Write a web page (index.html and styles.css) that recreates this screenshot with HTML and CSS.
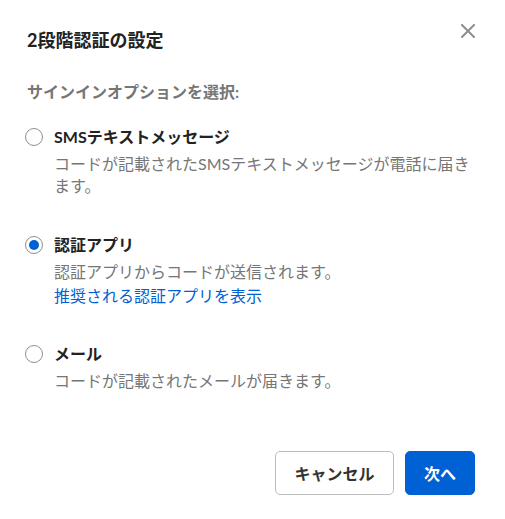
FILE: index.html
```html
<!DOCTYPE html>
<html lang="ja">
<head>
<meta charset="utf-8">
<title>2段階認証の設定</title>
<link rel="stylesheet" href="styles.css">
</head>
<body>
<div class="dialog">
  <div class="header">
    <h2 class="title">2段階認証の設定</h2>
    <button class="close" aria-label="閉じる">
      <svg width="14" height="14" viewBox="0 0 14 14"><path d="M1 1L13 13M13 1L1 13" stroke="#8e8e8e" stroke-width="2" stroke-linecap="square"/></svg>
    </button>
  </div>
  <p class="subtitle">サインインオプションを選択:</p>
  <div class="options">
    <label class="option opt-sms">
      <span class="radio"></span>
      <span class="body">
        <span class="label">SMSテキストメッセージ</span>
        <span class="desc">コードが記載されたSMSテキストメッセージが電話に届きます。</span>
      </span>
    </label>
    <label class="option opt-app">
      <span class="radio checked"></span>
      <span class="body">
        <span class="label">認証アプリ</span>
        <span class="desc">認証アプリからコードが送信されます。</span>
        <a class="link" href="#">推奨される認証アプリを表示</a>
      </span>
    </label>
    <label class="option opt-mail">
      <span class="radio"></span>
      <span class="body">
        <span class="label">メール</span>
        <span class="desc">コードが記載されたメールが届きます。</span>
      </span>
    </label>
  </div>
  <div class="footer">
    <button class="btn btn-secondary">キャンセル</button>
    <button class="btn btn-primary">次へ</button>
  </div>
</div>
</body>
</html>
```

FILE: styles.css
```css
* { box-sizing: border-box; }
html, body {
  margin: 0;
  padding: 0;
  background: #fff;
}
body {
  font-family: Lato, "Noto Sans CJK JP", sans-serif;
  color: #222;
}
.dialog {
  width: 505px;
  padding: 28px 30px 0 27px;
}
.header {
  display: flex;
  justify-content: space-between;
  align-items: flex-start;
}
.title {
  margin: 0;
  font-size: 18px;
  font-weight: 700;
  line-height: 24px;
  color: #222;
}
.close {
  border: 0;
  background: none;
  padding: 0;
  margin: -4px 0 0 0;
  width: 14px;
  height: 14px;
  display: flex;
  cursor: pointer;
}
.subtitle {
  margin: 30px 0 0 0;
  font-size: 16px;
  line-height: 20px;
  font-weight: 700;
  color: #767676;
}
.options {
  display: flex;
  flex-direction: column;
  gap: 37px;
  margin-top: 24px;
}
.option {
  display: flex;
  gap: 11px;
  align-items: flex-start;
}
.radio {
  flex: none;
  width: 18px;
  height: 18px;
  margin: 2px 0 0 -2px;
  border: 1px solid #8f8f8f;
  border-radius: 50%;
  display: flex;
  align-items: center;
  justify-content: center;
}
.radio.checked::after {
  content: "";
  width: 10px;
  height: 10px;
  border-radius: 50%;
  background: #0061d5;
}
.body {
  display: flex;
  flex-direction: column;
}
.label {
  font-size: 16px;
  font-weight: 700;
  line-height: 22px;
  color: #222;
}
.desc {
  margin-top: 5px;
  font-size: 16px;
  line-height: 22px;
  color: #767676;
}
.link {
  margin-top: 2px;
  font-size: 16px;
  line-height: 22px;
  color: #0061d5;
  text-decoration: none;
}
.opt-mail { margin-top: -1px; }
.footer {
  display: flex;
  justify-content: flex-end;
  gap: 11px;
  margin-top: 59px;
}
.btn {
  height: 44px;
  border-radius: 5px;
  font-family: Lato, "Noto Sans CJK JP", sans-serif;
  font-size: 16px;
  font-weight: 700;
  padding: 0;
  white-space: nowrap;
  cursor: pointer;
}
.btn-secondary {
  width: 119px;
  background: #fff;
  border: 1px solid #bcbcbc;
  color: #333;
}
.btn-primary {
  width: 70px;
  background: #0061d5;
  border: 1px solid #0061d5;
  color: #fff;
}
```
